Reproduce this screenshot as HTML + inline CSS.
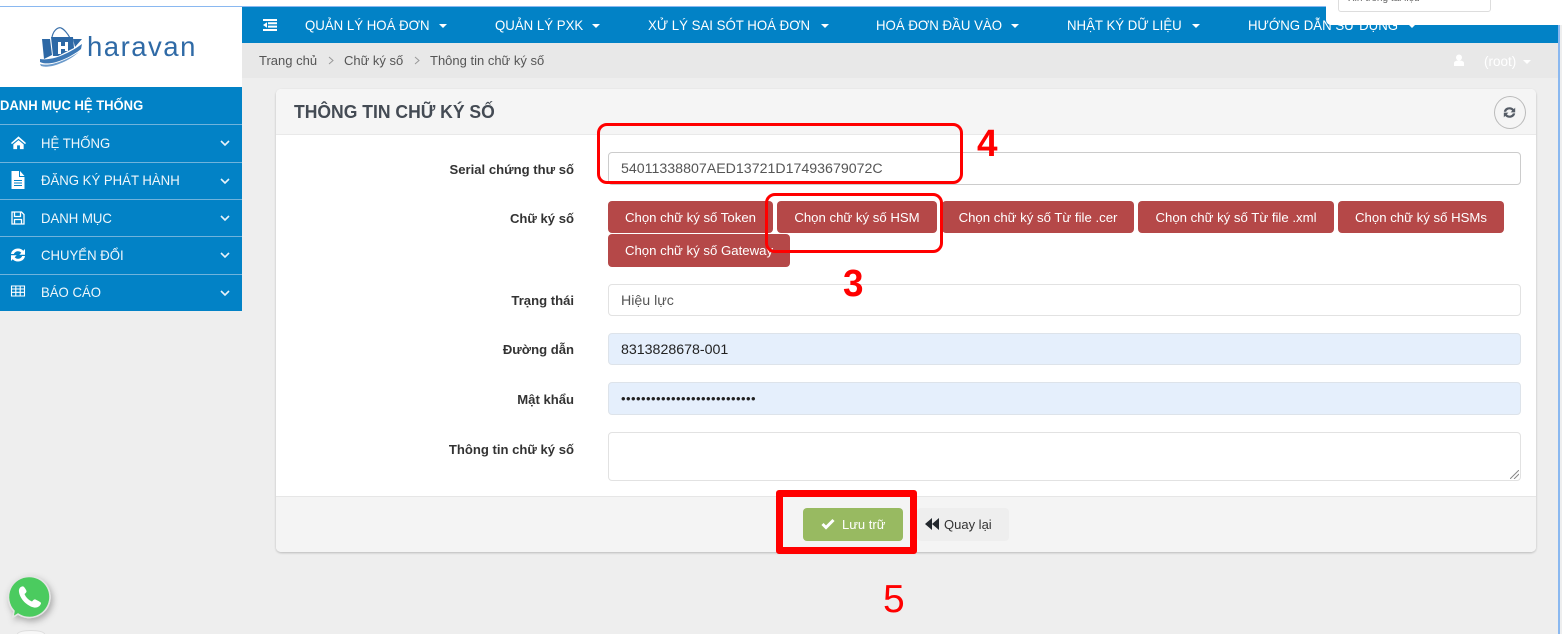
<!DOCTYPE html>
<html lang="vi"><head><meta charset="utf-8"><title>Thông tin chữ ký số</title>
<style>
html,body{margin:0;padding:0;width:1562px;height:634px;overflow:hidden;background:#eee}
#p{position:relative;width:1562px;height:634px;overflow:hidden;background:#eee;font-family:"Liberation Sans",Arial,sans-serif;color:#333}
.a{position:absolute;white-space:nowrap}
.nav{font-size:14px;color:#fff;line-height:18px;top:16px;transform:scaleX(.945);transform-origin:0 50%}
.caret{position:absolute;width:0;height:0;border-left:4.5px solid transparent;border-right:4.5px solid transparent;border-top:4.5px solid #fff}
.side{left:0;width:242px;height:36px;background:#0282c6;border-top:1px solid #6fb3dc}
.side span{position:absolute;left:41px;top:9px;font-size:14px;line-height:18px;color:#f0f7fb;transform:scaleX(.94);transform-origin:0 50%}
.side svg.ic{position:absolute;left:10px;top:10px}
.side svg.ch{position:absolute;left:220px;top:15px}
.lbl{font-size:13.1px;font-weight:bold;color:#333;right:988px;line-height:16px}
.inp{position:absolute;left:608px;width:911px;background:#fff;border:1px solid #e2e2e2;border-radius:4px;font-size:14.2px;color:#555;box-sizing:content-box}
.inp span{position:absolute;left:12px;top:8px;line-height:17px;white-space:nowrap}
.blue{background:#e5effc;border-color:#dde3ea;color:#222}
.btn{position:absolute;background:#b54848;color:#fff;border-radius:4px;font-size:13.2px;text-align:center;height:32px;line-height:33px;white-space:nowrap}
.red{position:absolute;border:3px solid #f00;box-sizing:border-box;border-radius:10px}
.num{position:absolute;color:#f00;font-weight:bold;font-size:38px;line-height:40px;transform:scaleX(.97);transform-origin:0 50%}
</style></head><body><div id="p">
<div class="a" style="left:0;top:0;width:1562px;height:6px;background:#fff"></div>
<div class="a" style="left:0;top:6px;width:1562px;height:1px;background:#8ab8f0"></div>
<div class="a" style="left:1558px;top:6px;width:2px;height:628px;background:#8ab8f0"></div>
<div class="a" style="left:0;top:7px;width:242px;height:80px;background:#fff"></div>
<!-- logo -->
<svg class="a" style="left:38px;top:26px" width="50" height="42" viewBox="0 0 50 42">
<path d="M14 11C16 2 22 1 23 2C26 3 30 8 32 12" fill="none" stroke="#3d72ab" stroke-width="1.2"/>
<path d="M4 13H12L14 29L6 33Z" fill="#2d68a5"/><path d="M13 11H35L36 22L20 30H15Z" fill="#2d68a5"/><path d="M35 13H44L37 21Z" fill="#2d68a5"/>
<path d="M20 16H23V20H27V16H30V25H27V23H23V28H20Z" fill="#fff"/>
<path d="M2 33C14 35 30 28 44 18L43 23C32 32 12 41 2 36Z" fill="#3d78b5"/><path d="M2 38C14 41 30 33 41 26C30 36 12 43 3 40Z" fill="#6b9acb"/>
</svg>
<div class="a" style="left:87px;top:31px;font-size:27.500px;line-height:32px;letter-spacing:1.500px;color:#2f6aa6">haravan</div>
<!-- sidebar -->
<div class="a" style="left:0;top:87px;width:242px;height:37px;background:#0282c6"></div>
<div class="a" style="left:0;top:96px;font-size:14px;font-weight:bold;line-height:18px;color:#fff;transform:scaleX(.93);transform-origin:0 50%">DANH MỤC HỆ THỐNG</div>
<div class="a side" style="top:124px;height:37px"><svg class="ic" width="15" height="15" viewBox="0 0 16 16" style="left:11px"><path d="M0 8.500L8 1.500L16 8.500L15 9.700L8 4L1 9.700ZM2.500 10L8 5.500L13.500 10V15H9.500V11H6.500V15H2.500Z" fill="#fff"/></svg><span>HỆ THỐNG</span><svg class="ch" width="10" height="7" viewBox="0 0 10 7"><path d="M1 1L5 5L9 1" fill="none" stroke="#e8f3fa" stroke-width="1.6"/></svg></div>
<div class="a side" style="top:162px;height:36px"><svg class="ic" width="16" height="18" viewBox="0 0 16 18" style="top:8px"><path d="M1.500 0H9V6H14.500V18H1.500ZM10 0L14.500 5H10ZM4 9V10H12V9ZM4 11.500V12.500H12V11.500ZM4 14V15H12V14Z" fill="#fff" fill-rule="evenodd"/></svg><span style="top:8px">ĐĂNG KÝ PHÁT HÀNH</span><svg class="ch" width="10" height="7" viewBox="0 0 10 7"><path d="M1 1L5 5L9 1" fill="none" stroke="#e8f3fa" stroke-width="1.6"/></svg></div>
<div class="a side" style="top:199px;height:36px"><svg class="ic" width="16" height="16" viewBox="0 0 16 16"><path d="M2 2H11.500L14 4.500V14H2Z M4.500 2.500V6.500H10.500V2.500 M4.500 13.500V9.500H11.500V13.500" fill="none" stroke="#fff" stroke-width="1.300"/></svg><span>DANH MỤC</span><svg class="ch" width="10" height="7" viewBox="0 0 10 7"><path d="M1 1L5 5L9 1" fill="none" stroke="#e8f3fa" stroke-width="1.6"/></svg></div>
<div class="a side" style="top:236px;height:37px"><svg class="ic" width="16" height="16" viewBox="0 0 16 16"><path d="M1 7C1.500 3.500 4.500 1.500 8 1.500C10.300 1.500 12.200 2.500 13.300 3.800L15 2V7.800H9.300L11.300 5.800C10.500 4.800 9.300 4.200 8 4.200C6.200 4.200 4.500 5.200 3.900 7ZM15 9C14.500 12.500 11.500 14.500 8 14.500C5.700 14.500 3.800 13.500 2.700 12.200L1 14V8.200H6.700L4.700 10.200C5.500 11.200 6.700 11.800 8 11.800C9.800 11.800 11.500 10.800 12.100 9Z" fill="#fff"/></svg><span>CHUYỂN ĐỔI</span><svg class="ch" width="10" height="7" viewBox="0 0 10 7"><path d="M1 1L5 5L9 1" fill="none" stroke="#e8f3fa" stroke-width="1.6"/></svg></div>
<div class="a side" style="top:274px;height:36px"><svg class="ic" width="16" height="16" viewBox="0 0 16 16" style="top:8px"><path d="M1.500 3H14.500V13H1.500ZM1.500 6H14.500M1.500 9.300H14.500M5.800 3V13M10.200 3V13" fill="none" stroke="#fff" stroke-width="1.100"/></svg><span style="top:8px">BÁO CÁO</span><svg class="ch" width="10" height="7" viewBox="0 0 10 7"><path d="M1 1L5 5L9 1" fill="none" stroke="#e8f3fa" stroke-width="1.6"/></svg></div>
<!-- nav -->
<div class="a" style="left:242px;top:7px;width:1316px;height:36px;background:#0282c6"></div>
<svg class="a" style="left:263px;top:19px" width="14" height="12" viewBox="0 0 14 12"><path d="M0 0H14V2H0ZM5 3.300H14V5.300H5ZM5 6.600H14V8.600H5ZM0 10H14V12H0ZM4 3.300V8.700L0 6Z" fill="#fff"/></svg>
<div class="a nav" style="left:305px">QUẢN LÝ HOÁ ĐƠN</div><i class="caret" style="left:439px;top:24px"></i>
<div class="a nav" style="left:495px">QUẢN LÝ PXK</div><i class="caret" style="left:592px;top:24px"></i>
<div class="a nav" style="left:648px">XỬ LÝ SAI SÓT HOÁ ĐƠN</div><i class="caret" style="left:821px;top:24px"></i>
<div class="a nav" style="left:876px">HOÁ ĐƠN ĐẦU VÀO</div><i class="caret" style="left:1011px;top:24px"></i>
<div class="a nav" style="left:1067px">NHẬT KÝ DỮ LIỆU</div><i class="caret" style="left:1192px;top:24px"></i>
<div class="a nav" style="left:1248px">HƯỚNG DẪN SỬ DỤNG</div><i class="caret" style="left:1408px;top:24px"></i>
<!-- popup -->
<div class="a" style="left:1326px;top:0;width:236px;height:25px;background:#fff;border-radius:0 0 0 5px"></div>
<div class="a" style="left:1338px;top:0;width:153px;height:13px;overflow:hidden"><div class="a" style="left:0;top:-10px;width:151px;height:20px;border:1px solid #ddd;border-radius:3px;background:#fff;overflow:hidden"><div class="a" style="left:9px;top:2px;font-size:10px;line-height:12px;color:#666">Xin trong tài liệu</div></div></div>
<!-- breadcrumb -->
<div class="a" style="left:242px;top:43px;width:1316px;height:35px;background:#e8e8e8"></div>
<div class="a" style="left:259px;top:52px;font-size:13px;line-height:17px;color:#555">Trang chủ</div>
<svg class="a" style="left:328px;top:56px" width="6" height="9" viewBox="0 0 6 9"><path d="M1 1L5 4.500L1 8" fill="none" stroke="#999" stroke-width="1"/></svg>
<div class="a" style="left:344px;top:52px;font-size:13px;line-height:17px;color:#555">Chữ ký số</div>
<svg class="a" style="left:414px;top:56px" width="6" height="9" viewBox="0 0 6 9"><path d="M1 1L5 4.500L1 8" fill="none" stroke="#999" stroke-width="1"/></svg>
<div class="a" style="left:430px;top:52px;font-size:13px;line-height:17px;color:#555">Thông tin chữ ký số</div>
<svg class="a" style="left:1453px;top:54px" width="12" height="13" viewBox="0 0 12 13"><circle cx="6" cy="3.500" r="3" fill="#fff"/><path d="M1 12V9C1 7.500 3 6.500 6 6.500C9 6.500 11 7.500 11 9V12Z" fill="#fff"/></svg>
<div class="a" style="left:1484px;top:53px;font-size:13.5px;line-height:18px;color:#fff">(root)</div><i class="caret" style="left:1523px;top:60px"></i>
<!-- panel -->
<div class="a" style="left:276px;top:89px;width:1260px;height:463px;background:#fff;border-radius:5px;box-shadow:0 1px 2px rgba(0,0,0,.22)"></div>
<div class="a" style="left:276px;top:89px;width:1260px;height:45px;background:#f5f5f5;border-bottom:1px solid #e9e9e9;border-radius:5px 5px 0 0"></div>
<div class="a" style="left:294px;top:101px;font-size:18px;font-weight:bold;line-height:22px;color:#444b54;transform:scaleX(.975);transform-origin:0 50%">THÔNG TIN CHỮ KÝ SỐ</div>
<div class="a" style="left:1494px;top:96px;width:32px;height:33px;border:1px solid #bbb;border-radius:50%;box-sizing:border-box"></div>
<svg class="a" style="left:1503px;top:106px" width="13" height="13" viewBox="0 0 16 16"><path d="M1 7C1.500 3.500 4.500 1.500 8 1.500C10.300 1.500 12.200 2.500 13.300 3.800L15 2V7.800H9.300L11.300 5.800C10.500 4.800 9.300 4.200 8 4.200C6.200 4.200 4.500 5.200 3.900 7ZM15 9C14.500 12.500 11.500 14.500 8 14.500C5.700 14.500 3.800 13.500 2.700 12.200L1 14V8.200H6.700L4.700 10.200C5.500 11.200 6.700 11.800 8 11.800C9.800 11.800 11.500 10.800 12.100 9Z" fill="#555c66"/></svg>
<!-- form -->
<div class="a lbl" style="top:162px">Serial chứng thư số</div>
<div class="inp" style="top:152px;height:31px;border-color:#ccc"><span>54011338807AED13721D17493679072C</span></div>
<div class="a lbl" style="top:211px">Chữ ký số</div>
<div class="btn" style="left:608px;top:201px;width:165px">Chọn chữ ký số Token</div>
<div class="btn" style="left:777px;top:201px;width:160px">Chọn chữ ký số HSM</div>
<div class="btn" style="left:942px;top:201px;width:192px">Chọn chữ ký số Từ file .cer</div>
<div class="btn" style="left:1138px;top:201px;width:196px">Chọn chữ ký số Từ file .xml</div>
<div class="btn" style="left:1338px;top:201px;width:166px">Chọn chữ ký số HSMs</div>
<div class="btn" style="left:608px;top:234px;width:182px;height:33px;line-height:33px">Chọn chữ ký số Gateway</div>
<div class="a lbl" style="top:293px">Trạng thái</div>
<div class="inp" style="top:284px;height:30px"><span>Hiệu lực</span></div>
<div class="a lbl" style="top:342px">Đường dẫn</div>
<div class="inp blue" style="top:333px;height:30px"><span>8313828678-001</span></div>
<div class="a lbl" style="top:392px">Mật khẩu</div>
<div class="inp blue" style="top:382px;height:31px"><span style="font-size:13px;letter-spacing:.45px;top:7px">•••••••••••••••••••••••••••</span></div>
<div class="a lbl" style="top:442px">Thông tin chữ ký số</div>
<div class="inp" style="top:432px;height:47px"><svg style="position:absolute;right:1px;bottom:1px" width="9" height="9" viewBox="0 0 9 9"><path d="M0 9L9 0M4 9L9 4" stroke="#888" stroke-width="1"/></svg></div>
<!-- footer -->
<div class="a" style="left:276px;top:496px;width:1260px;height:56px;background:#f4f4f4;border-top:1px solid #e6e6e6;box-sizing:border-box;border-radius:0 0 5px 5px"></div>
<div class="a" style="left:803px;top:508px;width:100px;height:33px;background:#98ba61;border-radius:4px"></div>
<svg class="a" style="left:821px;top:518px" width="14" height="12" viewBox="0 0 14 12"><path d="M1.500 6L5 9.500L12.500 2" fill="none" stroke="#fff" stroke-width="3"/></svg>
<div class="a" style="left:842px;top:516px;font-size:13px;line-height:17px;color:#fff">Lưu trữ</div>
<div class="a" style="left:917px;top:508px;width:92px;height:33px;background:#eee;border-radius:4px"></div>
<svg class="a" style="left:925px;top:518px" width="14" height="12" viewBox="0 0 14 12"><path d="M7 0V12L0 6ZM14 0V12L7 6Z" fill="#23282e"/></svg>
<div class="a" style="left:944px;top:516px;font-size:13px;line-height:17px;color:#333">Quay lại</div>
<!-- annotations -->
<div class="red" style="left:597px;top:123px;width:366px;height:61px"></div>
<div class="red" style="left:765px;top:193px;width:178px;height:60px"></div>
<div class="red" style="left:776px;top:490px;width:141px;height:64px;border-width:7px;border-radius:3px"></div>
<div class="num" style="left:977px;top:124px">4</div>
<div class="num" style="left:843px;top:264px">3</div>
<div class="a" style="left:883px;top:578px;font-size:39px;line-height:44px;color:#f00">5</div>
<!-- whatsapp -->
<svg class="a" style="left:0;top:568px" width="60" height="66" viewBox="0 0 60 66">
<defs><filter id="s" x="-40%" y="-40%" width="180%" height="180%"><feDropShadow dx="2" dy="3" stdDeviation="3.500" flood-color="#000" flood-opacity=".3"/></filter></defs>
<path d="M29.500 8.500A20.500 20.500 0 1 1 18 46L13 49L14 43A20.500 20.500 0 0 1 29.500 8.500Z" fill="#4ccb5e" stroke="#e4e4e4" stroke-width="1.500" filter="url(#s)"/>
<path d="M22 18.500C20 19 18.500 21 19 24C20 31 27 38 34 39.500C37 40 40 38.500 41 35.500C41.300 34.500 40.500 34 35.500 31.500C34.500 31 33.500 31.500 32 33.500C28.500 32 26 29.500 24.500 26C26.500 24.500 26.800 23.500 26.300 22.500C24 18 23 18.300 22 18.500Z" fill="#fff"/>
</svg>
<div class="a" style="left:17px;top:630px;width:28px;height:4px;background:#f7f7f7;border:1px solid #ddd;border-bottom:0;border-radius:14px 14px 0 0/4px 4px 0 0;box-sizing:border-box"></div>
</div></body></html>
